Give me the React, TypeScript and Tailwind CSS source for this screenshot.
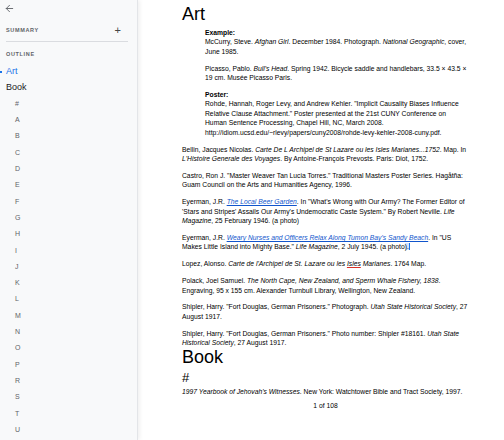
import React from "react";

const letters = ["#", "A", "B", "C", "D", "E", "F", "G", "H", "I", "J", "K", "L", "M", "N", "O", "P", "R", "S", "T", "U"];

function Sidebar() {
  return (
    <div className="relative w-[138px] shrink-0 h-[440px] bg-[#f8f9fa] border-r border-[#e3e5e8] shadow-[2px_0_4px_rgba(0,0,0,0.06)] overflow-hidden">
      <div className="h-[20px] pl-[4px] pt-[3px] text-[#5f6368]">
        <svg width="11" height="11" viewBox="0 0 24 24" fill="none" stroke="currentColor" strokeWidth="2" strokeLinecap="round" strokeLinejoin="round">
          <path d="M19 12H5" />
          <path d="M12 19l-7-7 7-7" />
        </svg>
      </div>
      <div className="h-[16px] mt-[2px] flex items-center justify-between pl-[6px] pr-[16px]">
        <span className="text-[5.5px] font-bold tracking-[0.12em] text-[#5f6368]">SUMMARY</span>
        <span className="text-[11px] leading-none text-[#444746]">+</span>
      </div>
      <div className="mt-[3px] ml-[6px] w-[122px] border-t border-[#dadce0]" />
      <div className="h-[16px] mt-[4px] flex items-center pl-[6px]">
        <span className="text-[5.5px] font-bold tracking-[0.12em] text-[#5f6368]">OUTLINE</span>
      </div>
      <div className="relative h-[16px] mt-[2px] flex items-center pl-[6px]">
        <span className="absolute left-0 top-[7px] w-[2px] h-[2px] bg-[#1a73e8]" />
        <span className="text-[9px] font-medium text-[#1a73e8]">Art</span>
      </div>
      <div className="h-[16px] flex items-center pl-[6px]">
        <span className="text-[9px] text-[#202124]">Book</span>
      </div>
      <div className="flex flex-col">
        {letters.map((l) => (
          <div key={l} className="h-[16.3px] flex items-center pl-[15px]">
            <span className="text-[7px] text-[#5f6368]">{l}</span>
          </div>
        ))}
      </div>
    </div>
  );
}

const P = ({ children, className = "mb-[7.5px]" }: { children: React.ReactNode; className?: string }) => (
  <p className={className}>{children}</p>
);

const Link = ({ children }: { children: React.ReactNode }) => (
  <span className="italic text-[#1155cc] underline decoration-[#1155cc]">{children}</span>
);

export default function App() {
  return (
    <div
      className="flex w-[504px] h-[440px] overflow-hidden bg-white"
      style={{ fontFamily: '"Liberation Sans", Arial, sans-serif' }}
    >
      <Sidebar />
      <div className="flex-1 relative overflow-hidden">
        <div className="pl-[44px] w-[331px] pt-[3px] text-[#000] text-[6.75px] leading-[9.4px]">
          <h1 className="text-[18px] leading-[22px] mb-[3px]">Art</h1>
          <div className="pl-[23px]">
            <p className="font-bold">Example:</p>
            <P>
              McCurry, Steve. <i>Afghan Girl</i>. December 1984. Photograph. <i>National Geographic</i>, cover, June 1985.
            </P>
            <P>
              Picasso, Pablo. <i>Bull's Head</i>. Spring 1942. Bicycle saddle and handlebars, 33.5 × 43.5 × 19 cm. Musée Picasso Paris.
            </P>
            <p className="font-bold">Poster:</p>
            <P>
              Rohde, Hannah, Roger Levy, and Andrew Kehler. "Implicit Causality Biases Influence Relative Clause Attachment." Poster presented at the 21st CUNY Conference on Human Sentence Processing, Chapel Hill, NC, March 2008. http://idiom.ucsd.edu/~rlevy/papers/cuny2008/rohde-levy-kehler-2008-cuny.pdf.
            </P>
          </div>
          <P>
            Bellin, Jacques Nicolas. <i>Carte De L Archipel de St Lazare ou les Isles Marianes...1752</i>. Map. In <i>L'Histoire Generale des Voyages</i>. By Antoine-François Prevosts. Paris: Diot, 1752.
          </P>
          <P>
            Castro, Ron J. "Master Weaver Tan Lucia Torres." Traditional Masters Poster Series. Hagåtña: Guam Council on the Arts and Humanities Agency, 1996.
          </P>
          <P>
            Eyerman, J.R. <Link>The Local Beer Garden</Link>. In "What's Wrong with Our Army? The Former Editor of 'Stars and Stripes' Assails Our Army's Undemocratic Caste System." By Robert Neville. <i>Life Magazine</i>, 25 February 1946. (a photo)
          </P>
          <P>
            Eyerman, J.R. <Link>Weary Nurses and Officers Relax Along Tumon Bay's Sandy Beach</Link>. In "US Makes Little Island into Mighty Base." <i>Life Magazine</i>, 2 July 1945. (a photo<span className="bg-[#d3e3fd] border-r border-[#1a73e8]">).</span>
          </P>
          <P>
            Lopez, Alonso. <i>Carte de l'Archipel de St. Lazare ou les <span className="underline decoration-[#d93025]">Isles</span> Marianes</i>. 1764 Map.
          </P>
          <P>
            Polack, Joel Samuel. <i>The North Cape, New Zealand, and Sperm Whale Fishery, 1838</i>. Engraving, 95 x 155 cm. Alexander Turnbull Library, Wellington, New Zealand.
          </P>
          <P>
            Shipler, Harry. "Fort Douglas, German Prisoners." Photograph. <i>Utah State Historical Society</i>, 27 August 1917.
          </P>
          <P className="mb-0">
            Shipler, Harry. "Fort Douglas, German Prisoners." Photo number: Shipler #18161. <i>Utah State Historical Society</i>, 27 August 1917.
          </P>
          <h1 className="text-[18px] leading-[18px] mt-[0px]">Book</h1>
          <h2 className="text-[13px] leading-[16px] mt-[4px]">#</h2>
          <P className="mt-[1px]">
            <i>1997 Yearbook of Jehovah's Witnesses</i>. New York: Watchtower Bible and Tract Society, 1997.
          </P>
          <div className="text-center mt-[5.5px]">1 of 108</div>
        </div>
      </div>
    </div>
  );
}
